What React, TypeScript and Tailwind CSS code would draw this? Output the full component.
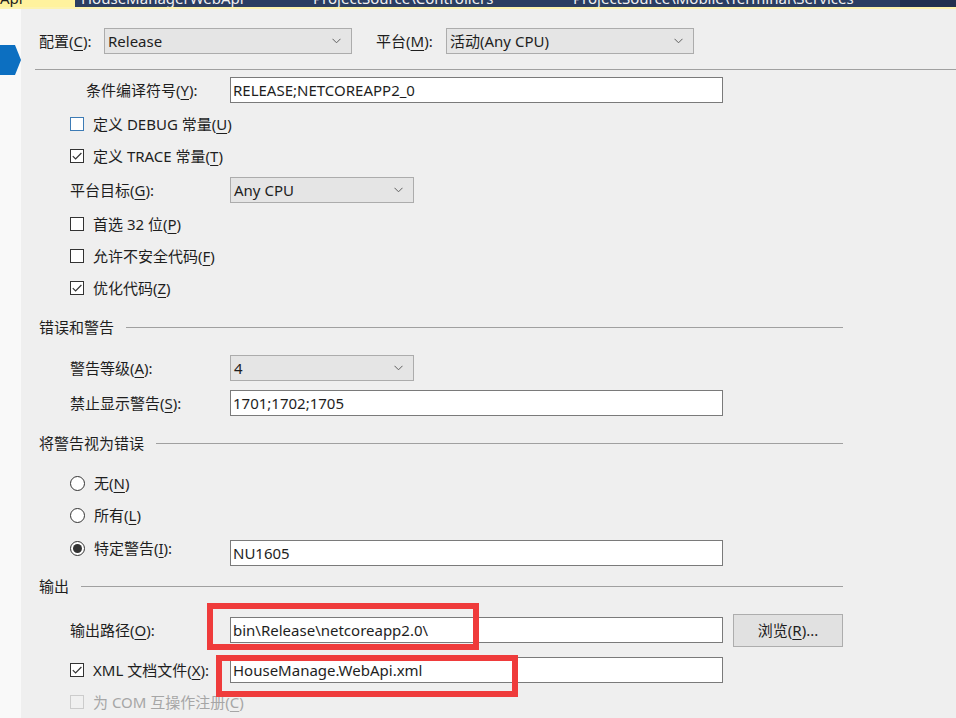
import React from 'react';

const K = ({ c }: { c: string }) => <span className="underline underline-offset-[3px] decoration-1">{c}</span>;

const Chevron = () => (
  <svg width="9" height="6" viewBox="0 0 9 6" className="shrink-0">
    <path d="M0.5 0.8 L4.5 4.8 L8.5 0.8" fill="none" stroke="#606060" strokeWidth="1" />
  </svg>
);

const Combo = ({ value, wide }: { value: string; wide?: boolean }) => (
  <div
    className={`${wide ? 'w-[248px]' : 'w-[184px]'} h-[26px] flex items-center justify-between bg-[#e5e5e5] border border-[#acacac] pl-[3px] pr-[10px] text-[#1e1e1e]`}
  >
    <span>{value}</span>
    <Chevron />
  </div>
);

const Input = ({ value }: { value?: string }) => (
  <div className="w-[493px] h-[26px] flex items-center bg-white border border-[#7a7a7a] pl-[2px] text-[#1e1e1e]">
    {value}
  </div>
);

const Box = ({ checked, focus, disabled }: { checked?: boolean; focus?: boolean; disabled?: boolean }) => (
  <div
    className={`w-[14px] h-[14px] shrink-0 border ${
      disabled ? 'border-[#cccccc] bg-[#f0f0f0]' : focus ? 'border-[#3d7bb5] bg-white' : 'border-[#333333] bg-white'
    } flex items-center justify-center`}
  >
    {checked && (
      <svg width="12" height="12" viewBox="0 0 12 12">
        <path d="M1.8 6.2 L4.6 9 L10.4 3" fill="none" stroke="#333333" strokeWidth="1.2" />
      </svg>
    )}
  </div>
);

const Radio = ({ checked }: { checked?: boolean }) => (
  <div className="w-[15px] h-[15px] shrink-0 rounded-full border border-[#333333] bg-white flex items-center justify-center">
    {checked && <div className="w-[9px] h-[9px] rounded-full bg-[#333333]" />}
  </div>
);

const CheckRow = ({ children, checked, focus, disabled }: { children: React.ReactNode; checked?: boolean; focus?: boolean; disabled?: boolean }) => (
  <div className="h-[32px] flex items-center gap-[9px]">
    <Box checked={checked} focus={focus} disabled={disabled} />
    <span className={disabled ? 'text-[#a6a6a6]' : ''}>{children}</span>
  </div>
);

const Section = ({ title, h }: { title: string; h: string }) => (
  <div className={`${h} w-[804px] ml-[18px] flex items-center gap-[12px]`}>
    <span>{title}</span>
    <div className="flex-1 h-px bg-[#a0a0a0]" />
  </div>
);

export default function App() {
  return (
    <div className="relative w-[956px] h-[718px] overflow-hidden bg-[#efefef] text-[15px] leading-[20px] text-[#1e1e1e] font-['Noto_Sans','Noto_Sans_CJK_SC',sans-serif]">
      {/* tab strip, mostly scrolled out of view */}
      <div className="h-[7px] flex overflow-hidden text-[15px] leading-[15px]">
        <div className="w-[72px] bg-[#fff29d] text-[#1e1e1e] pl-[0px]">
          <div className="-mt-[9px]">Api</div>
        </div>
        <div className="w-[3px] bg-[#fff29d]" />
        <div className="w-[225px] bg-[#2c3e61] text-[#f0f0f0] pl-[6px]">
          <div className="-mt-[9px]">HouseManagerWebApi</div>
        </div>
        <div className="w-[260px] bg-[#2c3e61] text-[#f0f0f0] pl-[13px]">
          <div className="-mt-[9px]">ProjectSource\Controllers</div>
        </div>
        <div className="w-[340px] bg-[#2c3e61] text-[#f0f0f0] pl-[13px]">
          <div className="-mt-[9px]">ProjectSource\Mobile\Terminal\Services</div>
        </div>
        <div className="flex-1 bg-[#223150]" />
      </div>
      <div className="h-[2px] bg-[#fdf3b0]" />

      <div className="flex h-[709px]">
        {/* left rail with the selected-page marker */}
        <div className="w-[21px] shrink-0 bg-[#f9f9f9] pt-[36px]">
          <div className="flex items-center">
            <div className="w-[15px] h-[30px] bg-[#0c6fc1]" />
            <div className="w-0 h-0 border-y-[15px] border-y-transparent border-l-[6px] border-l-[#0c6fc1]" />
          </div>
        </div>

        <div className="flex-1 flex flex-col">
          <div className="pt-[19px] pl-[18px] flex items-center h-[45px]">
            <span className="w-[65px]">
              配置(<K c="C" />):
            </span>
            <Combo value="Release" wide />
            <span className="w-[70px] ml-[24px]">
              平台(<K c="M" />):
            </span>
            <Combo value="活动(Any CPU)" wide />
          </div>
          <div className="mt-[15px] ml-[14px] h-px bg-[#a0a0a0]" />

          <div className="pl-[49px] flex flex-col">
            <div className="mt-[7px] h-[26px] flex items-center">
              <span className="w-[160px] pl-[16px]">
                条件编译符号(<K c="Y" />):
              </span>
              <Input value="RELEASE;NETCOREAPP2_0" />
            </div>
            <div className="mt-[5px]">
              <CheckRow focus>
                定义 DEBUG 常量(<K c="U" />)
              </CheckRow>
              <CheckRow checked>
                定义 TRACE 常量(<K c="T" />)
              </CheckRow>
            </div>
            <div className="h-[36px] flex items-center">
              <span className="w-[160px]">
                平台目标(<K c="G" />):
              </span>
              <Combo value="Any CPU" />
            </div>
            <CheckRow>
              首选 32 位(<K c="P" />)
            </CheckRow>
            <CheckRow>
              允许不安全代码(<K c="F" />)
            </CheckRow>
            <CheckRow checked>
              优化代码(<K c="Z" />)
            </CheckRow>
          </div>

          <Section title="错误和警告" h="h-[46px]" />

          <div className="pl-[49px] flex flex-col">
            <div className="h-[36px] flex items-center">
              <span className="w-[160px]">
                警告等级(<K c="A" />):
              </span>
              <Combo value="4" />
            </div>
            <div className="h-[34px] flex items-center">
              <span className="w-[160px]">
                禁止显示警告(<K c="S" />):
              </span>
              <Input value="1701;1702;1705" />
            </div>
          </div>

          <Section title="将警告视为错误" h="h-[46px]" />

          <div className="pl-[49px] flex flex-col">
            <div className="h-[34px] flex items-center gap-[9px]">
              <Radio />
              <span>
                无(<K c="N" />)
              </span>
            </div>
            <div className="h-[30px] flex items-center gap-[9px]">
              <Radio />
              <span>
                所有(<K c="L" />)
              </span>
            </div>
            <div className="h-[36px] flex items-start">
              <div className="w-[160px] mt-[8px] flex items-center gap-[9px]">
                <Radio checked />
                <span>
                  特定警告(<K c="I" />):
                </span>
              </div>
              <div className="mt-[10px]">
                <Input value="NU1605" />
              </div>
            </div>
          </div>

          <Section title="输出" h="h-[40px]" />

          <div className="pl-[49px] flex flex-col">
            <div className="h-[48px] flex items-center">
              <span className="w-[160px]">
                输出路径(<K c="O" />):
              </span>
              <Input value="bin\Release\netcoreapp2.0\" />
              <button className="ml-[10px] w-[110px] h-[33px] bg-[#e1e1e1] border border-[#adadad] text-[#1e1e1e]">
                浏览(<K c="R" />)...
              </button>
            </div>
            <div className="h-[32px] flex items-center">
              <div className="w-[160px] flex items-center gap-[9px]">
                <Box checked />
                <span>
                  XML 文档文件(<K c="X" />):
                </span>
              </div>
              <Input value="HouseManage.WebApi.xml" />
            </div>
            <CheckRow disabled>
              为 COM 互操作注册(<K c="C" />)
            </CheckRow>
          </div>
        </div>
      </div>

      {/* red annotation frames */}
      <div className="absolute left-[207px] top-[603px] w-[272px] h-[47px] border-[6px] border-[#ef3b3b]" />
      <div className="absolute left-[216px] top-[655px] w-[302px] h-[42px] border-[6px] border-[#ef3b3b]" />
    </div>
  );
}
